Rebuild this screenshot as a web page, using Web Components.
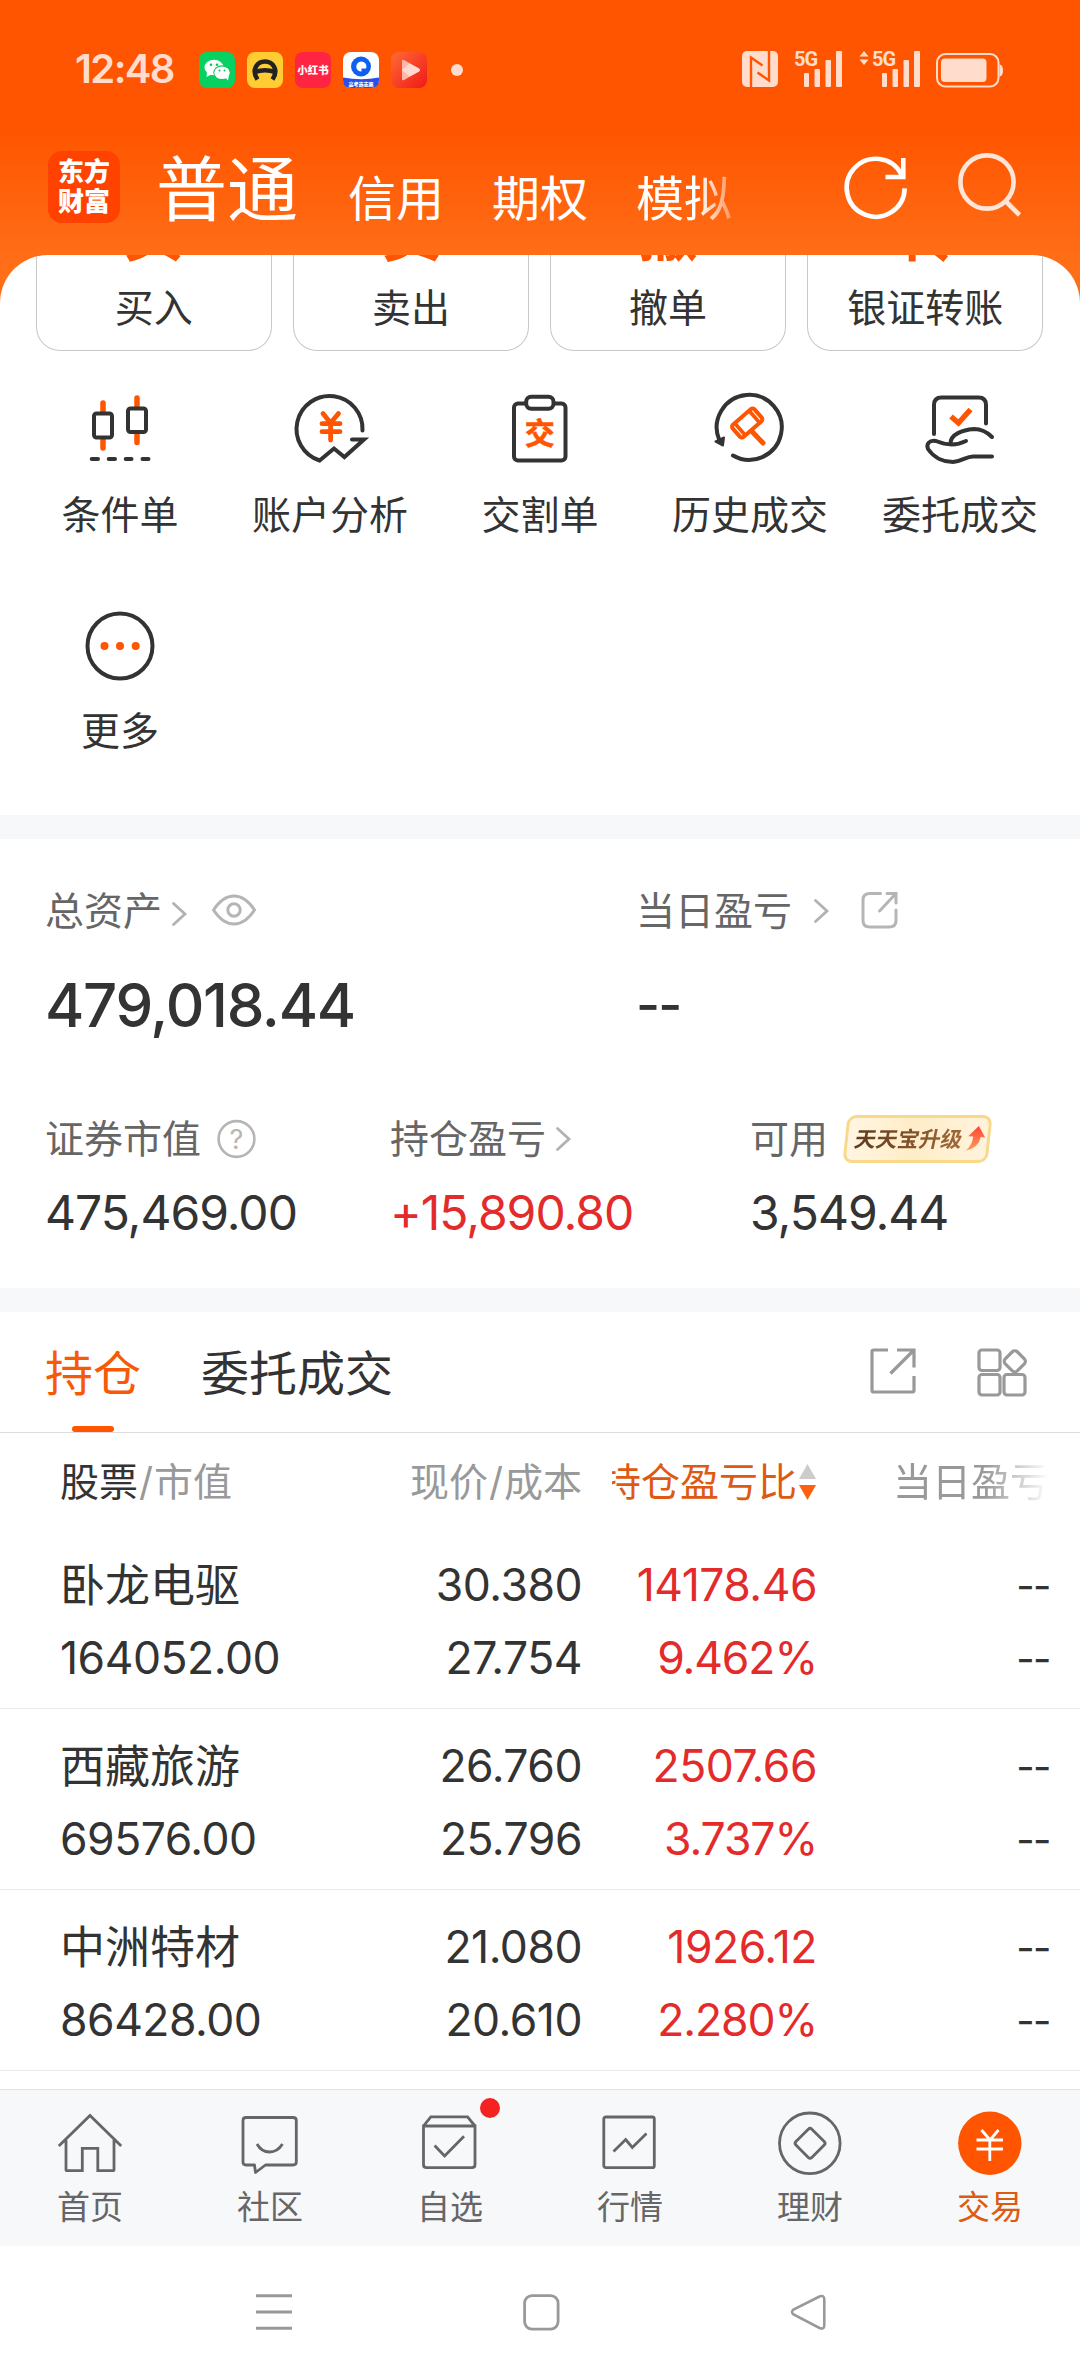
<!DOCTYPE html>
<html lang="zh-CN">
<head>
<meta charset="utf-8">
<meta name="viewport" content="width=device-width, initial-scale=1">
<title>交易</title>
<style>
    body {
        margin: 0;
        width: 1080px;
        height: 2378px;
        overflow: hidden;
        color: #333;
        font-family: Inter, "Noto Sans CJK SC", sans-serif;
        background: #fff linear-gradient(#ff5500 130px, #ff6d17 255px, #ff6f19 303px) no-repeat 0 0 / 100% 303px;
    }
</style>
</head>
<body>
<status-bar time="12:48"></status-bar>

<app-header>
    <header-tab active>普通</header-tab>
    <header-tab>信用</header-tab>
    <header-tab>期权</header-tab>
    <header-tab fade>模拟</header-tab>
</app-header>

<main-panel>
    <trade-actions>
        <trade-card glyph="买">买入</trade-card>
        <trade-card glyph="卖">卖出</trade-card>
        <trade-card glyph="撤">撤单</trade-card>
        <trade-card glyph="转">银证转账</trade-card>
    </trade-actions>

    <quick-grid>
        <quick-entry icon="candles">条件单</quick-entry>
        <quick-entry icon="analysis">账户分析</quick-entry>
        <quick-entry icon="clipboard">交割单</quick-entry>
        <quick-entry icon="history">历史成交</quick-entry>
        <quick-entry icon="hand">委托成交</quick-entry>
        <quick-entry icon="more">更多</quick-entry>
    </quick-grid>

    <asset-panel>
        <asset-item slot="top" size="big" value="479,018.44">总资产<ui-icon name="chevron" style="margin: 5px 0 0 10px"></ui-icon><ui-icon name="eye" style="margin: -3px 0 0 25px"></ui-icon></asset-item>
        <asset-item slot="top" size="big" value="--" empty>当日盈亏<ui-icon name="chevron" style="margin: -1px 0 0 22px"></ui-icon><ui-icon name="share" style="margin: -2px 0 0 32px"></ui-icon></asset-item>
        <asset-item slot="bottom" value="475,469.00">证券市值<ui-icon name="help" style="margin-left: 16px"></ui-icon></asset-item>
        <asset-item slot="bottom" value="+15,890.80" up>持仓盈亏<ui-icon name="chevron" style="margin-left: 10px"></ui-icon></asset-item>
        <asset-item slot="bottom" value="3,549.44">可用<promo-badge>天天宝升级</promo-badge></asset-item>
    </asset-panel>

    <holding-tabs>
        <holding-tab active>持仓</holding-tab>
        <holding-tab>委托成交</holding-tab>
        <ui-icon slot="tools" name="export"></ui-icon>
        <ui-icon slot="tools" name="widgets"></ui-icon>
    </holding-tabs>

    <holding-head></holding-head>
    <holding-row name="卧龙电驱" amount="164052.00" price="30.380" cost="27.754" profit="14178.46" rate="9.462%"></holding-row>
    <holding-row name="西藏旅游" amount="69576.00" price="26.760" cost="25.796" profit="2507.66" rate="3.737%"></holding-row>
    <holding-row name="中洲特材" amount="86428.00" price="21.080" cost="20.610" profit="1926.12" rate="2.280%"></holding-row>
</main-panel>

<tab-bar>
    <tab-item icon="home">首页</tab-item>
    <tab-item icon="chat">社区</tab-item>
    <tab-item icon="box" dot>自选</tab-item>
    <tab-item icon="chart">行情</tab-item>
    <tab-item icon="coin">理财</tab-item>
    <tab-item icon="trade" active>交易</tab-item>
</tab-bar>

<system-nav></system-nav>

<script>
// name: [width, height, stroke colour, stroke width, markup]
const icons = {
    refresh: [64, 64, '#fff', 4.6, `<path d="M60.7 32.4A29 29 0 1 1 57.5 18.5"/><path d="M59.3 2V21H41.5" stroke-linejoin="miter"/>`],
    search: [64, 64, '#ffe5d8', 4.6, `<circle cx="29" cy="29" r="26.6"/><path d="M47.500 48L61.500 62"/>`],
    chevron: [15, 24, '#b2b2b2', 2.8, `<path d="M1.500 1.500L13 12L1.500 22.500" stroke-linecap="round"/>`],
    eye: [44, 32, '#b5b5b5', 3, `<path d="M1.500 16C8 6 14.500 2 22 2S36 6 42.500 16C36 26 29.500 30 22 30S8 26 1.500 16Z"/><circle cx="22" cy="16" r="6.200"/>`],
    share: [37, 38, '#b5b5b5', 3, `<path d="M19.500 2.500H9Q2 2.500 2 9V29.500Q2 36 9 36H28Q35 36 35 29.500V19" stroke-linecap="round"/><path d="M26 2.500H35V12M35 2.500L18.500 20" stroke-linecap="round"/>`],
    help: [39, 40, '#b5b5b5', 2.6, `<circle cx="19.500" cy="20" r="17.900"/><text x="19.500" y="29.500" font-size="27" text-anchor="middle" fill="#b5b5b5" stroke="none">?</text>`],
    export: [46, 46, '#999', 3.2, `<path d="M18 2H3.500Q2 2 2 3.500V42.500Q2 44 3.500 44H42Q44 44 44 42.500V28"/><path d="M27 2H44V19.500M44 2L20.500 25.500"/>`],
    widgets: [50, 49, '#999', 3.2, `<rect x="2" y="2" width="21" height="20.500" rx="3"/><rect x="2" y="26.500" width="21" height="20.500" rx="3"/><rect x="27" y="26.500" width="21" height="20.500" rx="3"/><rect x="29.300" y="4.800" width="17" height="17" rx="3.500" transform="rotate(45 37.800 13.300)"/>`],
    candles: [72, 72, '#333', 4, `<g stroke="#ff5500" stroke-width="5.500" stroke-linecap="round"><path d="M19 9V18M19 46V54M53 4V13M53 39V48.500"/></g><rect x="10" y="19.500" width="18" height="24" rx="2.500"/><rect x="44" y="14.500" width="18" height="23.500" rx="2.500"/><path d="M7.700 65H14M24.700 65H31M41.700 65H47.500M58.500 65H64.500" stroke-linecap="round"/>`],
    analysis: [72, 72, '#333', 4, `<path d="M68.500 36.500A33 33 0 1 0 25.600 66.500L40 54.500L50.400 63L70 45.500H58" stroke-linecap="round"/><path d="M29 19.500L36.600 29L44.500 19.500M28 29.700H46M28 37.700H46M36.600 29V46" stroke="#ff5500" stroke-width="4.800" stroke-linecap="round"/>`],
    clipboard: [72, 72, '#333', 4, `<rect x="10" y="9.500" width="51.500" height="57" rx="4"/><rect x="22.200" y="2.800" width="27.300" height="12" rx="5" fill="#fff"/><text x="35.700" y="50" font-size="30" font-weight="700" text-anchor="middle" fill="#ff5500" stroke="#ff5500" stroke-width=".6">交</text>`],
    history: [72, 72, '#333', 4, `<path d="M19 61.500A32.500 32.500 0 1 0 5.300 46" stroke-linecap="round"/><path d="M1.500 47.500L10 43.500L9 51.500Z" fill="#333" stroke-width="2" stroke-linejoin="round"/><g stroke="#ff5500"><g transform="translate(33.200 29) rotate(-41)"><rect x="-14.500" y="-8" width="29" height="16" rx="2.500" stroke-width="4"/><path d="M-9.500 -8V8M9.500 -8V8" stroke-width="3.600"/></g><path d="M38.500 38L49 49" stroke-width="5" stroke-linecap="round"/></g>`],
    hand: [72, 72, '#333', 4, `<path d="M10 40V11Q10 3.500 17.500 3.500H54.500Q62 3.500 62 11V29.500" stroke-linecap="round"/><path d="M27 22.500L34.500 29L46.500 15.500" stroke="#ff5500" stroke-width="5.400"/><path d="M68 43C62 37 56 35 50 35C39 36 26 40 26.500 50" stroke-linecap="round"/><path d="M42 47C34 51 24 52 12 47C5 46 2 50 4 55C10 64 20 68 29 68C38 67.500 42 62.500 49 62.500H68" stroke-linecap="round"/>`],
    more: [72, 72, '#333', 4, `<circle cx="36" cy="36" r="32.500"/><g fill="#ff5500" stroke="none"><circle cx="20.500" cy="36" r="4"/><circle cx="36" cy="36" r="4"/><circle cx="51.700" cy="36" r="4"/></g>`],
    home: [64, 64, '#666', 2.8, `<path d="M.8 35L32 4.500L63.200 35M8 29V58.500Q8 59.700 9.200 59.700H24.300V37.300H39.800V59.700H54.800Q56 59.700 56 58.500V29"/>`],
    chat: [64, 64, '#666', 2.8, `<path d="M8 6.500H55Q58.300 6.500 58.300 9.500V51Q58.300 54 55 54H27.500L17.500 61.500L16.500 54H8Q5 54 5 51V9.500Q5 6.500 8 6.500Z" stroke-linejoin="round"/><path d="M19 33Q23.500 41 31.500 41T44.500 33"/>`],
    box: [64, 64, '#666', 2.8, `<path d="M5.500 15V53.500Q5.500 56.700 8.500 56.700H54Q57 56.700 57 53.500V15ZL12.800 5.800H49.600L57 15"/><path d="M16.600 34.500L26.600 45L46 25.300"/>`],
    chart: [64, 64, '#666', 2.8, `<rect x="5.800" y="6" width="50.500" height="50.700" rx="2"/><path d="M15.500 40.500L27.700 28.500L34.300 36.500L48.500 22.500"/>`],
    coin: [64, 64, '#666', 2.8, `<circle cx="31.800" cy="32.300" r="30.300"/><rect x="20.800" y="21" width="22.500" height="22.500" rx="2.500" transform="rotate(45 32 32.300)"/>`],
    trade: [64, 64, '#fff', 2.8, `<circle cx="31.800" cy="32.300" r="31.700" fill="#ff5500" stroke="none"/><path d="M23.500 19L32 29L40.500 19M18.500 29H45M18.500 38H45M31.800 29V50"/>`],
    menu: [36, 36, '#999', 3, `<path d="M0 1.700H36M0 18H36M0 34.300H36"/>`],
    square: [37, 37, '#999', 2.8, `<rect x="1.600" y="1.600" width="33.500" height="33.500" rx="7.500"/>`],
    back: [36, 37, '#999', 2.6, `<path d="M29.500 2.500L3.500 15.500Q.5 18 3.500 20.500L29.500 34Q34.300 36 34.300 31V5.500Q34.300 .5 29.500 2.500Z"/>`],
    nfc: [36, 36, '#ff5500', 2.4, `<rect width="36" height="36" rx="5" fill="#ffdccb" stroke="none"/><path d="M9 36V6.500L20.500 14.500M27 0V29.500L15.500 21.500" stroke-linejoin="miter"/>`],
    bars: [40, 36, 'none', 0, `<g fill="#ffdccb"><rect y="22" width="5" height="14" rx="1"/><rect x="10.500" y="18" width="5.500" height="18" rx="1"/><rect x="21.500" y="9" width="5.500" height="27" rx="1"/><rect x="32" width="6" height="36" rx="1"/></g>`],
    battery: [68, 36, '#ffdccb', 2, `<rect x="1" y="2" width="61.500" height="32.500" rx="8.500"/><rect x="5" y="6.500" width="45.500" height="23.500" rx="4" fill="#ffdccb" stroke="none"/><path d="M63.500 12.500Q67 13 67 18.500T63.500 24.500Z" fill="#ffdccb" stroke="none"/>`],
    updown: [10, 14, 'none', 0, `<path d="M5 0L9.500 5.500H.5ZM5 14L9.500 8.500H.5Z" fill="#ffdccb"/>`],
    wechat: [36, 36, 'none', 0, `<rect width="36" height="36" rx="8" fill="#07d160"/><g fill="#fff"><ellipse cx="15" cy="15.500" rx="9.500" ry="7.800"/><path d="M8 20L7.500 25L13 22Z"/></g><g fill="#07c75c"><ellipse cx="23" cy="20.500" rx="8.700" ry="7.200"/><circle cx="12" cy="12.700" r="1.300"/><circle cx="18" cy="12.700" r="1.300"/></g><g fill="#fff"><ellipse cx="23" cy="20.700" rx="7.800" ry="6.300"/><path d="M26 25L29 28.500L30 23Z"/></g><circle cx="20.500" cy="18.500" r="1" fill="#07c75c"/><circle cx="25.500" cy="18.500" r="1" fill="#07c75c"/>`],
    auto: [36, 36, '#222', 4.6, `<rect width="36" height="36" rx="8" fill="#ffcd32" stroke="none"/><path d="M10.500 27.500C4 18 10 9.500 18 9.500S32 18 25.500 27.500"/><path d="M8 20Q18 16.500 28 20" stroke-width="4.500"/>`],
    xhs: [36, 36, 'none', 0, `<rect width="36" height="36" rx="8" fill="#ff2442"/><text x="18" y="22" font-size="10.500" font-weight="900" text-anchor="middle" fill="#fff">小红书</text>`],
    browser: [36, 36, 'none', 0, `<rect width="36" height="36" rx="8" fill="#fff"/><path d="M0 25.500Q18 29 36 25.500V28Q36 36 28 36H8Q0 36 0 28Z" fill="#2a4fe8"/><circle cx="18" cy="14.500" r="10" fill="#1060f0"/><path d="M18 9.500A5 5 0 1 0 18.500 19.500V16.500H23A5 5 0 0 0 18 9.500Z" fill="#fff"/><text x="18" y="33.800" font-size="5" font-weight="900" text-anchor="middle" fill="#fff">高考选志愿</text>`],
    video: [36, 36, 'none', 0, `<defs><linearGradient id="g" x2="1" y2="1"><stop stop-color="#ff6b35"/><stop offset="1" stop-color="#f01818"/></linearGradient></defs><rect width="36" height="36" rx="8" fill="url(#g)"/><path d="M11 9Q11 7 13 8L28 16.500Q30 18 28 19.500L13 28Q11 29 11 27Z" fill="#ffb8a8"/><path d="M11 18L18.500 11.500L28 16.500Q30 18 28 19.500L18.500 24.500Z" fill="#ffd9cf"/>`],
    up: [18, 25, 'none', 0, `<defs><linearGradient id="g" x2="0" y2="1"><stop stop-color="#ff4433"/><stop offset="1" stop-color="#ff9a5c"/></linearGradient></defs><path d="M10.500 0L18 11.500L13.500 11Q12.500 22 0 24.500Q6 19 6 10.500L1 10.300Z" fill="url(#g)"/>`]
};

class UiIcon extends HTMLElement {
    constructor() {
        super();
        this.attachShadow({mode: 'open'});
    }

    connectedCallback() {
        const [w, h, color, width, markup] = icons[this.getAttribute('name')];
        this.shadowRoot.innerHTML = `
            <style>
                :host { display: block; flex: none; width: ${w}px; height: ${h}px; }
                svg { display: block; overflow: visible; }
            </style>
            <svg width="${w}" height="${h}" viewBox="0 0 ${w} ${h}" fill="none" stroke="${color}" stroke-width="${width}">${markup}</svg>`;
    }
}
window.customElements.define('ui-icon', UiIcon);

// Most elements are only styles plus markup, so they share this helper
const define = (name, render) => {
    window.customElements.define(name, class extends HTMLElement {
        constructor() {
            super();
            this.attachShadow({mode: 'open'});
        }

        connectedCallback() {
            this.shadowRoot.innerHTML = render(this);
        }
    });
};

define('status-bar', el => `
    <style>
        :host { display: flex; align-items: center; height: 140px; padding: 0 76px 0 75px; box-sizing: border-box; color: #ffdccb; }
        .time { width: 124px; font-size: 40px; font-weight: 600; letter-spacing: -1.600px; line-height: 48px; margin-top: -3px; }
        .apps { display: flex; gap: 12px; }
        .dot { width: 12px; height: 12px; border-radius: 50%; background: #ffdccb; margin-left: 24px; }
        .right { display: flex; margin: -2px 0 0 auto; }
        .net { display: flex; align-items: flex-start; height: 36px; }
        .net span { width: 23px; margin: 1px -13px 0 -1px; font: 700 20px/14px Roboto, sans-serif; letter-spacing: -1px; }
    </style>
    <div class="time">${el.getAttribute('time')}</div>
    <div class="apps">
        <ui-icon name="wechat"></ui-icon><ui-icon name="auto"></ui-icon><ui-icon name="xhs"></ui-icon><ui-icon name="browser"></ui-icon><ui-icon name="video"></ui-icon>
    </div>
    <div class="dot"></div>
    <div class="right">
        <ui-icon name="nfc"></ui-icon>
        <div class="net" style="margin-left: 17px"><span>5G</span><ui-icon name="bars"></ui-icon></div>
        <div class="net" style="margin-left: 15px"><ui-icon name="updown" style="margin-right: 4px"></ui-icon><span>5G</span><ui-icon name="bars"></ui-icon></div>
        <ui-icon name="battery" style="margin: 1px 0 0 14px"></ui-icon>
    </div>`);

define('app-header', () => `
    <style>
        :host { display: flex; align-items: center; height: 115px; padding: 0 58px 21px 48px; box-sizing: border-box; color: #fff; }
        .logo { display: grid; place-content: center; width: 72px; height: 72px; border-radius: 14px; background: #ff4200; font-size: 26px; font-weight: 900; line-height: 30px; text-align: center; }
        nav { display: flex; align-items: center; gap: 48px; margin-left: 36px; }
        .tools { display: flex; gap: 50px; margin-left: auto; }
    </style>
    <div class="logo"><div>东方</div><div>财富</div></div>
    <nav><slot></slot></nav>
    <div class="tools">
        <ui-icon name="refresh" style="margin-top: 2px"></ui-icon>
        <ui-icon name="search" style="margin-top: -1px"></ui-icon>
    </div>`);

define('header-tab', () => `
    <style>
        :host { display: block; font-size: 48px; line-height: 60px; margin-top: 23px; white-space: nowrap; }
        :host([active]) { font-size: 71px; line-height: 80px; margin-top: 4px; width: 144px; }
        :host([fade]) { -webkit-mask-image: linear-gradient(90deg, #000 62px, transparent 112px); mask-image: linear-gradient(90deg, #000 62px, transparent 112px); }
    </style>
    <slot></slot>`);

define('main-panel', () => `
    <style>
        :host { display: block; height: 1834px; background: #fff; border-radius: 48px 48px 0 0; overflow: hidden; }
    </style>
    <slot></slot>`);

define('trade-actions', () => `
    <style>
        :host { display: grid; grid-template-columns: repeat(4, 1fr); gap: 21.500px; padding: 0 37px 0 36px; height: 96px; overflow: hidden; }
    </style>
    <slot></slot>`);

// The list is scrolled, so only the lower edge of the big glyph is left
define('trade-card', el => `
    <style>
        :host { display: flex; flex-direction: column; justify-content: flex-end; align-items: center; height: 96px; box-sizing: border-box; padding-bottom: 22px; border: 1px solid #c8c8c8; border-top: 0; border-radius: 0 0 24px 24px; font-size: 39px; line-height: 40px; }
        b { flex: none; margin-bottom: 24px; font-size: 60px; line-height: 60px; color: #ff5500; }
    </style>
    <b>${el.getAttribute('glyph')}</b>
    <span><slot></slot></span>`);

define('quick-grid', () => `
    <style>
        :host { display: grid; grid-template-columns: repeat(5, 1fr); grid-auto-rows: 216px; height: 464px; box-sizing: border-box; padding: 43px 15px 0; }
    </style>
    <slot></slot>`);

define('quick-entry', el => `
    <style>
        :host { display: flex; flex-direction: column; align-items: center; gap: 25px; font-size: 39px; line-height: 48px; }
    </style>
    <ui-icon name="${el.getAttribute('icon')}"></ui-icon>
    <span><slot></slot></span>`);

define('asset-panel', () => `
    <style>
        :host { display: block; border: solid #f7f8fa; border-width: 24px 0; height: 449px; }
        .top, .bottom { display: grid; padding: 48px 0 0 45px; }
        .top { grid-template-columns: 591px 1fr; }
        .bottom { grid-template-columns: 345px 360px 1fr; padding-top: 78px; }
    </style>
    <div class="top"><slot name="top"></slot></div>
    <div class="bottom"><slot name="bottom"></slot></div>`);

define('asset-item', el => `
    <style>
        :host { display: block; }
        .label { display: flex; align-items: center; height: 48px; font-size: 39px; line-height: 48px; color: #666; white-space: nowrap; }
        .value { margin-top: 22px; font-size: 48px; line-height: 56px; letter-spacing: -1px; }
        :host([size="big"]) .value { margin-top: 38px; font-size: 60px; line-height: 64px; font-weight: 500; letter-spacing: -1.300px; }
        :host([empty]) .value { font-size: 52px; letter-spacing: -1.800px; }
        :host([up]) .value { color: #e32b2b; }
    </style>
    <div class="label"><slot></slot></div>
    <div class="value">${el.getAttribute('value')}</div>`);

define('promo-badge', () => `
    <style>
        :host { display: block; margin-left: 17px; }
        .box { display: flex; align-items: center; width: 145px; height: 48px; box-sizing: border-box; padding-left: 7px; border: 3px solid #f8d98a; border-radius: 9px; background: linear-gradient(90deg, #fff6e2, #ffedc8 45%, #fff3dc); transform: skewX(-6deg); color: #7d4a22; font-size: 21.500px; font-weight: 700; line-height: 40px; }
        span { transform: skewX(-6deg); color: transparent; background: linear-gradient(90deg, #5f3a1c, #a2683a); -webkit-background-clip: text; background-clip: text; }
        ui-icon { margin: -1px 0 0 4px; }
    </style>
    <div class="box"><span><slot></slot></span><ui-icon name="up"></ui-icon></div>`);

define('holding-tabs', () => `
    <style>
        :host { display: flex; align-items: center; justify-content: space-between; height: 121px; box-sizing: border-box; padding: 0 53px 0 45px; border-bottom: 1px solid #ddd; }
        .tabs { display: flex; gap: 60px; }
        .tools { display: flex; gap: 61px; }
    </style>
    <div class="tabs"><slot></slot></div>
    <div class="tools"><slot name="tools"></slot></div>`);

define('holding-tab', () => `
    <style>
        :host { display: block; position: relative; height: 120px; box-sizing: border-box; padding-top: 2px; font-size: 48px; line-height: 120px; }
        :host([active]) { color: #f75a06; }
        :host([active])::after { content: ""; position: absolute; left: 27px; bottom: 0; width: 42px; height: 6px; border-radius: 3px; background: #ff5500; }
    </style>
    <slot></slot>`);

const columns = 'display: grid; grid-template-columns: 300px 222px 235px 1fr; padding: 0 30px 0 60px; box-sizing: border-box;';

define('holding-head', () => `
    <style>
        :host { ${columns} align-items: center; height: 95px; padding-top: 3px; font-size: 39px; line-height: 48px; color: #999; white-space: nowrap; }
        em { font-style: normal; color: #333; }
        i { font-style: normal; margin: 0 1px; }
        .right { text-align: right; }
        .sort { display: flex; justify-content: flex-end; align-items: center; overflow: hidden; margin-left: 30px; padding-right: 1px; color: #de5a12; }
        svg { flex: none; margin-left: 2px; }
        .fade { margin-right: -3px; padding-right: 4px; -webkit-mask-image: linear-gradient(270deg, transparent 4px, #000 68px); mask-image: linear-gradient(270deg, transparent 4px, #000 68px); }
    </style>
    <div><em>股票</em><i>/</i>市值</div>
    <div class="right">现价<i>/</i>成本</div>
    <div class="sort">持仓盈亏比<svg width="17" height="36"><path d="M8.500 0L17 15H0Z" fill="#ccc"/><path d="M8.500 36L17 21H0Z" fill="#ff5f10"/></svg></div>
    <div class="right fade">当日盈亏</div>`);

define('holding-row', el => `
    <style>
        :host { ${columns} height: 181px; padding-top: 20.500px; border-bottom: 1px solid #ebebeb; font-size: 44.500px; line-height: 73px; letter-spacing: -.5px; text-align: right; }
        .name { text-align: left; }
        .name b { display: block; font-weight: 400; font-size: 45px; letter-spacing: 0; }
        .up { color: #e32b2b; }
        .up span { letter-spacing: -1.100px; }
        .empty { font-size: 40px; letter-spacing: -1.500px; }
    </style>
    <div class="name"><b>${el.getAttribute('name')}</b>${el.getAttribute('amount')}</div>
    <div>${el.getAttribute('price')}<br>${el.getAttribute('cost')}</div>
    <div class="up">${el.getAttribute('profit')}<br><span>${el.getAttribute('rate')}</span></div>
    <div class="empty">--<br>--</div>`);

define('tab-bar', () => `
    <style>
        :host { display: grid; grid-template-columns: repeat(6, 1fr); height: 157px; box-sizing: border-box; border-top: 1px solid #e2e4e2; background: #f7f8fa; }
    </style>
    <slot></slot>`);

define('tab-item', el => `
    <style>
        :host { display: flex; flex-direction: column; align-items: center; gap: 12px; padding-top: 21px; position: relative; font-size: 33px; line-height: 40px; color: #666; }
        :host([active]) { color: #dc5a12; }
        :host([dot])::after { content: ""; position: absolute; left: 120px; top: 8px; width: 20px; height: 20px; border-radius: 50%; background: #f52222; }
    </style>
    <ui-icon name="${el.getAttribute('icon')}"></ui-icon>
    <span><slot></slot></span>`);

define('system-nav', () => `
    <style>
        :host { display: flex; justify-content: space-between; align-items: center; height: 132px; padding: 0 254px 0 256px; background: #fff; }
    </style>
    <ui-icon name="menu"></ui-icon>
    <ui-icon name="square"></ui-icon>
    <ui-icon name="back"></ui-icon>`);
</script>
</body>
</html>
